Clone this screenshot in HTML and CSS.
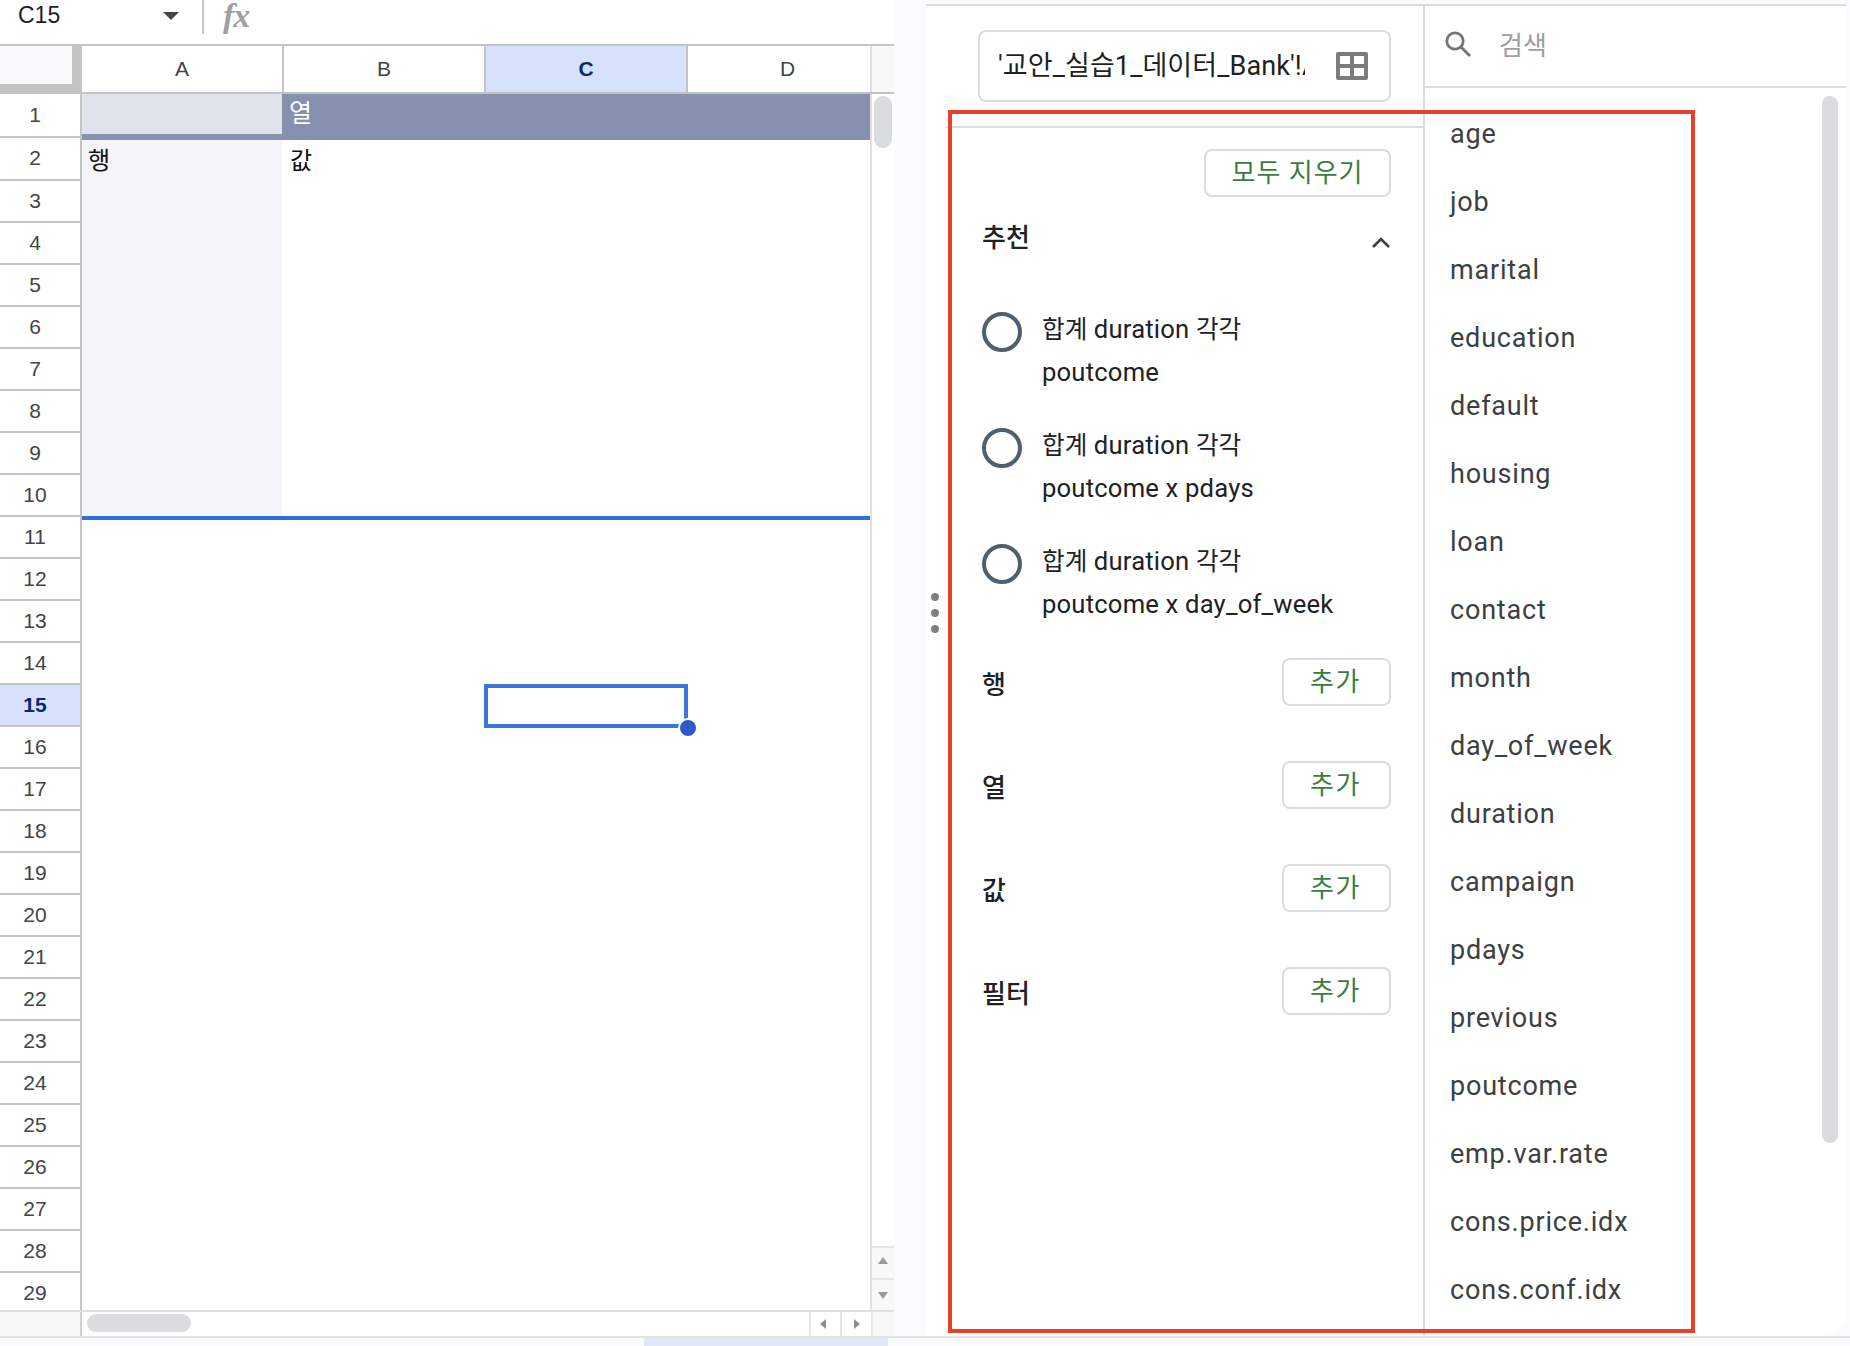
FILE: index.html
```html
<!DOCTYPE html>
<html lang="ko">
<head>
<meta charset="utf-8">
<title>피봇 테이블</title>
<link rel="stylesheet" href="styles.css">
</head>
<body>
<div class="main">
  <section class="sheet">
    <div class="formula-bar">
      <div class="name-box"><span class="name-text">C15</span><span class="name-caret"></span></div>
      <span class="fx">fx</span>
    </div>
    <div class="col-heads">
      <div class="corner"><div class="corner-inner"></div></div>
      <div class="col-head col-wide">A</div>
      <div class="col-head col-wide">B</div>
      <div class="col-head col-wide col-active">C</div>
      <div class="col-head col-narrow">D</div>
      <div class="col-end"></div>
    </div>
    <div class="grid-body">
      <div class="row-heads">
        <div class="row-head row-tall">1</div>
        <div class="row-head row-tall">2</div>
        <div class="row-head">3</div>
        <div class="row-head">4</div>
        <div class="row-head">5</div>
        <div class="row-head">6</div>
        <div class="row-head">7</div>
        <div class="row-head">8</div>
        <div class="row-head">9</div>
        <div class="row-head">10</div>
        <div class="row-head">11</div>
        <div class="row-head">12</div>
        <div class="row-head">13</div>
        <div class="row-head">14</div>
        <div class="row-head row-active">15</div>
        <div class="row-head">16</div>
        <div class="row-head">17</div>
        <div class="row-head">18</div>
        <div class="row-head">19</div>
        <div class="row-head">20</div>
        <div class="row-head">21</div>
        <div class="row-head">22</div>
        <div class="row-head">23</div>
        <div class="row-head">24</div>
        <div class="row-head">25</div>
        <div class="row-head">26</div>
        <div class="row-head">27</div>
        <div class="row-head">28</div>
        <div class="row-head">29</div>
      </div>
      <div class="cells">
        <div class="pivot-head">
          <div class="pivot-blank"></div>
          <div class="pivot-col-label">열</div>
        </div>
        <div class="pivot-band"></div>
        <div class="pivot-body">
          <div class="pivot-rows">행</div>
          <div class="pivot-values">값</div>
        </div>
        <div class="selection"><span class="handle"></span></div>
      </div>
      <div class="v-scroll">
        <div class="v-thumb"></div>
        <div class="v-arrows">
          <div class="v-btn v-btn-up"><span class="tri tri-up"></span></div>
          <div class="v-btn"><span class="tri tri-down"></span></div>
        </div>
      </div>
    </div>
    <div class="h-scroll">
      <div class="h-start"></div>
      <div class="h-track"><div class="h-thumb"></div></div>
      <div class="h-btn h-btn-left"><span class="tri tri-left"></span></div>
      <div class="h-btn"><span class="tri tri-right"></span></div>
      <div class="h-end"></div>
    </div>
  </section>

  <div class="gutter"></div>

  <aside class="panel">
    <div class="dots"><i></i><i></i><i></i></div>
    <div class="config">
      <div class="source">
        <div class="source-box">
          <span class="source-text">'교안_실습1_데이터_Bank'!A1:U41189</span>
          <svg class="grid-icon" viewBox="0 0 32 28" aria-hidden="true"><path fill="#7b7b7b" fill-rule="evenodd" d="M2 0h28a2 2 0 0 1 2 2v24a2 2 0 0 1-2 2H2a2 2 0 0 1-2-2V2a2 2 0 0 1 2-2zM4 4v8h10V4zM18 4v8h10V4zM4 16v8h10v-8zM18 16v8h10v-8z"/></svg>
        </div>
      </div>
      <div class="config-body">
        <div class="clear-row"><button class="btn btn-clear">모두 지우기</button></div>
        <div class="suggest-head">
          <span class="label">추천</span>
          <svg class="chevron" viewBox="0 0 18 11" aria-hidden="true"><path fill="none" stroke="#3c4043" stroke-width="2.6" d="M1 10l8-8 8 8"/></svg>
        </div>
        <div class="suggest">
          <div class="radio"></div>
          <div class="suggest-text"><span class="ko">합계</span> duration <span class="ko">각각</span><br>poutcome</div>
        </div>
        <div class="suggest">
          <div class="radio"></div>
          <div class="suggest-text"><span class="ko">합계</span> duration <span class="ko">각각</span><br>poutcome x pdays</div>
        </div>
        <div class="suggest">
          <div class="radio"></div>
          <div class="suggest-text"><span class="ko">합계</span> duration <span class="ko">각각</span><br>poutcome x day_of_week</div>
        </div>
        <div class="add-row add-first"><span class="label label-low">행</span><button class="btn btn-add">추가</button></div>
        <div class="add-row"><span class="label label-low">열</span><button class="btn btn-add">추가</button></div>
        <div class="add-row"><span class="label label-low">값</span><button class="btn btn-add">추가</button></div>
        <div class="add-row"><span class="label label-low">필터</span><button class="btn btn-add">추가</button></div>
      </div>
    </div>
    <div class="fields">
      <div class="search">
        <svg class="search-icon" viewBox="0 0 26 26" aria-hidden="true"><circle cx="10" cy="10" r="8.2" fill="none" stroke="#757575" stroke-width="2.8"/><path d="M16 16l9 9" stroke="#757575" stroke-width="2.8" fill="none"/></svg>
        <span class="search-text">검색</span>
      </div>
      <div class="field-wrap">
        <ul class="field-list">
          <li>age</li>
          <li>job</li>
          <li>marital</li>
          <li>education</li>
          <li>default</li>
          <li>housing</li>
          <li>loan</li>
          <li>contact</li>
          <li>month</li>
          <li>day_of_week</li>
          <li>duration</li>
          <li>campaign</li>
          <li>pdays</li>
          <li>previous</li>
          <li>poutcome</li>
          <li>emp.var.rate</li>
          <li>cons.price.idx</li>
          <li>cons.conf.idx</li>
        </ul>
        <div class="field-thumb"></div>
      </div>
    </div>
  </aside>
</div>
<div class="footer"><div class="footer-tab"></div></div>
<div class="red-frame"></div>
</body>
</html>
```
FILE: styles.css
```css
* { box-sizing: border-box; }
html, body { margin: 0; padding: 0; }
body {
  position: relative;
  width: 1850px;
  height: 1346px;
  overflow: hidden;
  background: #f9fbfd;
  font-family: "Liberation Sans", "Noto Sans CJK KR", sans-serif;
}
.main { display: flex; height: 1336px; }

/* Sheet */
.sheet { width: 894px; display: flex; flex-direction: column; background: #fff; }
.formula-bar { height: 44px; display: flex; align-items: flex-start; }
.name-box {
  width: 204px; height: 34px; display: flex; align-items: flex-start;
  justify-content: space-between; padding: 2px 23px 0 18px;
  border-right: 2px solid #c7c7c7;
}
.name-text { font-size: 23px; line-height: 26px; color: #1f1f1f; }
.name-caret {
  margin-top: 10px; width: 0; height: 0;
  border-left: 8px solid transparent; border-right: 8px solid transparent;
  border-top: 8px solid #444746;
}
.fx {
  margin-left: 19px; font-family: "Liberation Serif", serif; font-style: italic;
  font-weight: 700; font-size: 34px; line-height: 32px; color: #a0a0a0; letter-spacing: -1px;
}
.col-heads {
  height: 50px; display: flex;
  border-top: 2px solid #c4c4c4; border-bottom: 2px solid #c4c4c4;
}
.corner { width: 82px; background: #c4c4c4; }
.corner-inner { width: 72px; height: 38px; background: #f8f9fa; }
.col-head {
  display: flex; align-items: center; justify-content: center;
  border-right: 2px solid #c4c4c4; font-size: 21px; color: #444;
  background: #fff;
}
.col-wide { width: 202px; }
.col-narrow { width: 184px; padding-left: 17px; }
.col-active { background: #d6e2fb; color: #0b2a66; font-weight: 700; }
.col-end { flex: 1; background: #f8f8f8; border-left: 2px solid #e0e0e0; margin-left: -2px; }

.grid-body { height: 1216px; display: flex; overflow: hidden; }
.row-heads { width: 82px; flex: none; border-right: 2px solid #c4c4c4; }
.row-head {
  height: 42px; display: flex; align-items: center; justify-content: center;
  border-bottom: 2px solid #c4c4c4; font-size: 21px; color: #444; background: #fff;
  padding-right: 10px;
}
.row-tall { height: 43.5px; }
.row-active { background: #d6e2fb; color: #0b2a66; font-weight: 700; }
.cells { position: relative; width: 788px; flex: none; }
.pivot-head { height: 40px; display: flex; }
.pivot-blank { width: 200px; background: #dfe3ec; }
.pivot-col-label {
  flex: 1; background: #8591ae; color: #fff; font-size: 25px; line-height: 38px; padding-left: 7px;
}
.pivot-band { height: 6px; background: #8591ae; }
.pivot-body { height: 380px; display: flex; border-bottom: 4px solid #2f6fdc; }
.pivot-rows {
  width: 200px; background: #f3f5f8; color: #111; font-size: 24px; line-height: 36px;
  padding: 3px 0 0 6px;
}
.pivot-values { flex: 1; color: #111; font-size: 24px; line-height: 36px; padding: 3px 0 0 8px; }
.selection {
  position: absolute; left: 402px; top: 590px; width: 204px; height: 44px;
  border: 4px solid #3a75e0;
}
.handle {
  position: absolute; right: -12px; bottom: -12px; width: 16px; height: 16px;
  border-radius: 50%; background: #2a5bc8; box-shadow: 0 0 0 2px #fff;
}
.v-scroll {
  flex: 1; display: flex; flex-direction: column; justify-content: space-between;
  background: #fff; border-left: 2px solid #e0e0e0;
}
.v-thumb { width: 18px; height: 52px; margin: 2px 0 0 2px; border-radius: 9px; background: #dadce0; }
.v-arrows { display: flex; flex-direction: column; background: #f8f8f8; }
.v-btn {
  height: 32px; display: flex; align-items: center; justify-content: center;
  border-top: 2px solid #e6e6e6;
}
.v-btn-up { padding-bottom: 5px; }
.tri { display: block; width: 0; height: 0; }
.tri-up { border-left: 5.5px solid transparent; border-right: 5.5px solid transparent; border-bottom: 7px solid #9a9a9a; }
.tri-down { border-left: 5.5px solid transparent; border-right: 5.5px solid transparent; border-top: 7px solid #9a9a9a; }
.tri-left { border-top: 5px solid transparent; border-bottom: 5px solid transparent; border-right: 6px solid #8f8f8f; }
.tri-right { border-top: 5px solid transparent; border-bottom: 5px solid transparent; border-left: 6px solid #8f8f8f; }

.h-scroll { height: 26px; display: flex; border-top: 2px solid #e0e0e0; }
.h-start { width: 82px; background: #f6f6f6; border-right: 2px solid #d0d0d0; }
.h-track { width: 727px; padding: 2px 0 0 5px; }
.h-thumb { width: 104px; height: 18px; border-radius: 9px; background: #dadce0; }
.h-btn {
  width: 31px; display: flex; align-items: center; justify-content: center;
  border-left: 2px solid #e6e6e6; background: #fff;
}
.h-btn-left { padding-right: 6px; }
.h-end { flex: 1; background: #f8f8f8; border-left: 2px solid #e6e6e6; }

.gutter { width: 32px; flex: none; }

/* Panel */
.panel {
  position: relative;
  width: 920px; display: flex; background: #fff; margin-top: 4px;
  border-top: 2px solid #dadce0; border-bottom-right-radius: 24px; overflow: hidden;
  font-family: Roboto, "Noto Sans CJK KR", sans-serif;
}
.dots { position: absolute; left: 5px; top: 587px; display: flex; flex-direction: column; gap: 8px; }
.dots i { display: block; width: 8px; height: 8px; border-radius: 50%; background: #808080; }
.config { width: 499px; flex: none; padding-left: 20px; border-right: 2px solid #dadce0; }
.source { height: 122px; padding: 24px 32px 0 32px; border-bottom: 2px solid #dadce0; }
.source-box {
  height: 72px; display: flex; align-items: center; justify-content: space-between;
  padding: 0 21px 0 18px; border: 2px solid #dadce0; border-radius: 8px;
}
.source-text {
  width: 307px; overflow: hidden; white-space: nowrap;
  font-size: 27px; line-height: 36px; letter-spacing: 0.1px; color: #1f1f1f;
}
.grid-icon { width: 32px; height: 28px; flex: none; }
.config-body { padding: 0 32px 0 33px; }
.clear-row { display: flex; justify-content: flex-end; padding-top: 21px; }
.btn {
  height: 48px; padding: 0; background: #fff; border: 2px solid #dadce0; border-radius: 8px;
  color: #3a7d44; font-family: Roboto, "Noto Sans CJK KR", sans-serif; font-size: 26px; line-height: 40px;
}
.btn-clear { width: 187px; letter-spacing: 1px; }
.btn-add { width: 109px; letter-spacing: 1.5px; text-indent: -2px; }
.label { font-size: 26px; font-weight: 500; line-height: 40px; color: #202124; padding-left: 3px; }
.label-low { padding-top: 5px; line-height: 40px; }
.suggest-head { height: 40px; margin-top: 21px; display: flex; align-items: center; justify-content: space-between; }
.chevron { width: 18px; height: 11px; margin: 8px 1px 0 0; }
.suggest { display: flex; gap: 20px; margin-top: 31px; padding-left: 3px; }
.suggest-head + .suggest { margin-top: 50px; }
.radio { width: 40px; height: 40px; margin-top: 4px; border: 4px solid #4c6070; border-radius: 50%; flex: none; }
.suggest-text { font-size: 25.6px; line-height: 42px; letter-spacing: 0.2px; color: #202124; }
.ko { font-size: 24.6px; letter-spacing: 0; }
.add-row { height: 48px; margin-top: 55px; display: flex; align-items: center; justify-content: space-between; }
.add-first { margin-top: 33px; }

.fields { flex: 1; display: flex; flex-direction: column; min-width: 0; }
.search { height: 82px; flex: none; display: flex; align-items: center; padding: 0 0 6px 20px; gap: 28px; border-bottom: 2px solid #dadce0; }
.search-icon { width: 26px; height: 26px; margin-top: 2px; }
.search-text { font-size: 26px; color: #9e9e9e; }
.field-wrap { flex: 1; display: flex; min-height: 0; }
.field-list { flex: 1; list-style: none; margin: 0; padding: 12px 0 0 25px; }
.field-list li { height: 68px; font-size: 27px; line-height: 68px; letter-spacing: 0.8px; color: #3c4043; }
.field-thumb { width: 16px; height: 1047px; margin: 8px 8px 0 0; border-radius: 8px; background: #dadce0; }

/* Footer */
.footer { height: 10px; border-top: 2px solid #e1e4e1; padding-left: 644px; }
.footer-tab { width: 244px; height: 8px; background: #e1e8f5; }

/* Annotation */
.red-frame {
  position: absolute; left: 948px; top: 110px; width: 747px; height: 1223px;
  border: 4px solid #e8412a; pointer-events: none;
}
```
